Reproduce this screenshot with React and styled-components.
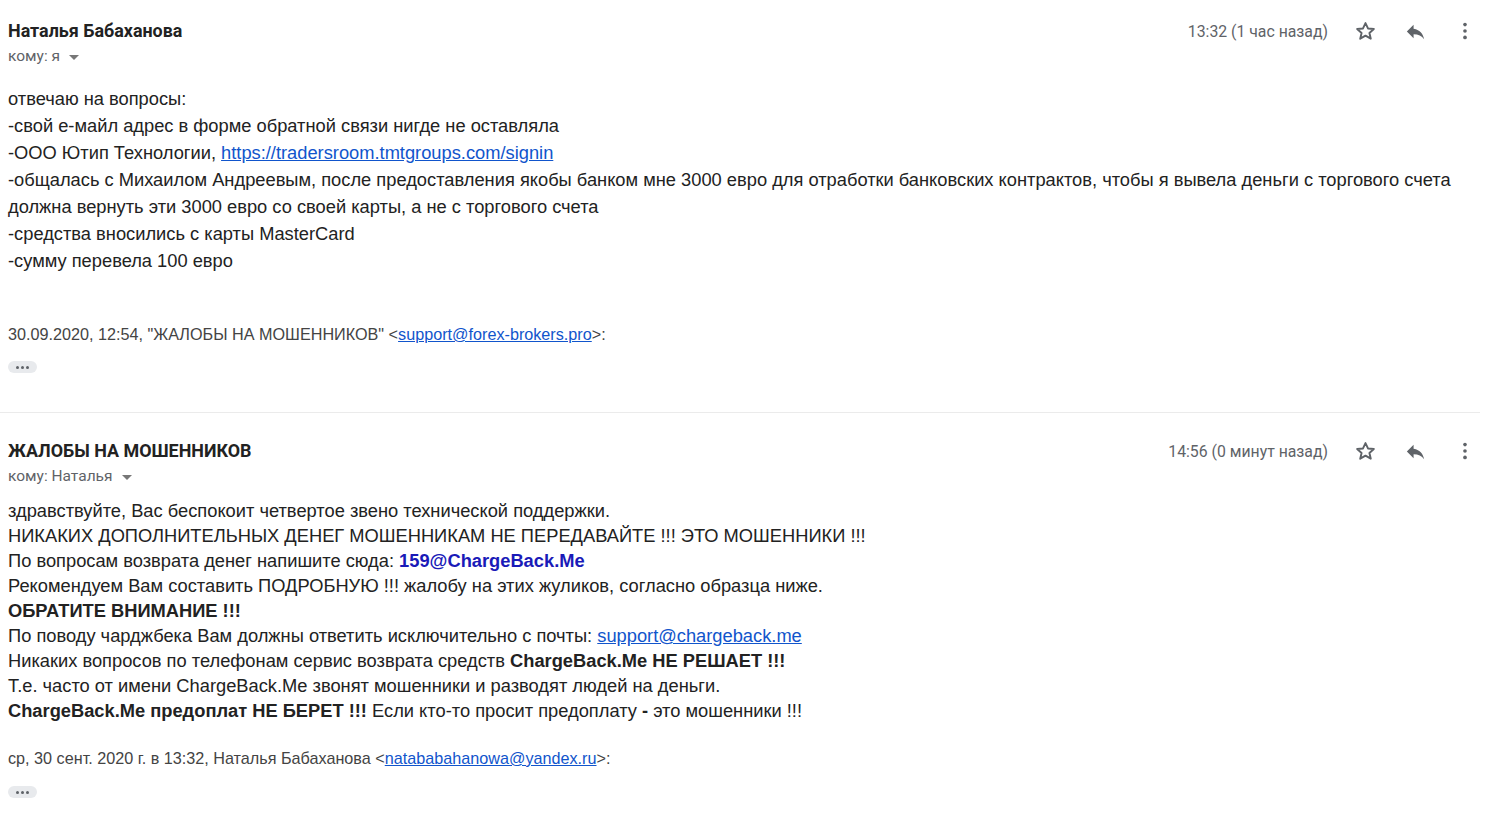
import React from 'react';
import styled, { createGlobalStyle } from 'styled-components';

const GlobalStyle = createGlobalStyle`
  html, body {
    margin: 0;
    padding: 0;
    background: #fff;
  }
  body {
    font-family: "Liberation Sans", Arial, sans-serif;
    color: #222;
  }
`;

const StarIcon = () => (
  <svg width="23" height="23" viewBox="0 0 24 24" fill="none" stroke="#5f6368" strokeWidth="2" strokeLinejoin="round">
    <path d="M12 3.2l2.6 5.6 6.1.6-4.6 4.1 1.4 6-5.5-3.2-5.5 3.2 1.4-6-4.6-4.1 6.1-.6z" />
  </svg>
);

const ReplyIcon = () => (
  <svg width="23" height="23" viewBox="0 0 24 24" fill="#5f6368">
    <path d="M10 9V5l-7 7 7 7v-4.1c5 0 8.5 1.6 11 5.1-1-5-4-10-11-11z" />
  </svg>
);

const MoreIcon = () => (
  <svg width="22" height="22" viewBox="0 0 24 24" fill="#5f6368">
    <circle cx="12" cy="5" r="2" />
    <circle cx="12" cy="12" r="2" />
    <circle cx="12" cy="19" r="2" />
  </svg>
);

const Page = styled.div`
  width: 1480px;
  padding-top: 18px;
`;

const Message = styled.section`
  padding: 0 0 0 8px;
  border-bottom: ${(p) => (p.divider ? '1px solid #ebebeb' : 'none')};
  padding-bottom: ${(p) => (p.divider ? '39px' : '20px')};
  margin-bottom: ${(p) => (p.divider ? '25px' : '0')};
`;

const Header = styled.div`
  display: flex;
  justify-content: space-between;
  align-items: flex-start;
`;

const Sender = styled.div`
  display: flex;
  flex-direction: column;
`;

const Name = styled.div`
  font-family: Roboto, "Liberation Sans", sans-serif;
  font-weight: 700;
  font-size: 17.9px;
  line-height: 26px;
  color: #222;
`;

const Recipient = styled.div`
  font-family: Roboto, "Liberation Sans", sans-serif;
  font-size: 15.5px;
  line-height: 24px;
  color: #5f6368;
  display: flex;
  align-items: center;
  gap: 9px;
`;

const Caret = styled.span`
  width: 0;
  height: 0;
  border-left: 5px solid transparent;
  border-right: 5px solid transparent;
  border-top: 5px solid #777;
  margin-top: 2px;
`;

const Actions = styled.div`
  display: flex;
  align-items: center;
  height: 26px;
  margin-right: -10px;
`;

const Time = styled.span`
  font-family: Roboto, "Liberation Sans", sans-serif;
  font-size: 15.8px;
  color: #5f6368;
  margin-right: 12px;
`;

const IconButton = styled.span`
  display: inline-flex;
  align-items: center;
  justify-content: center;
  width: 50px;
  height: 26px;
`;

const Body = styled.div`
  margin-top: ${(p) => p.top}px;
  font-size: 18.3px;
  line-height: ${(p) => p.lh}px;
  color: #222;
`;

const Line = styled.div``;

const Quote = styled.div`
  margin-top: ${(p) => p.top}px;
  font-size: 16.2px;
  line-height: 24px;
  color: #444;
`;

const Link = styled.a`
  color: #1155cc;
  text-decoration: underline;
`;

const Strong = styled.b`
  font-weight: 700;
  color: ${(p) => p.color || '#222'};
`;

const Ellipsis = styled.div`
  margin-top: ${(p) => p.top}px;
  width: 29px;
  height: 12px;
  border-radius: 6px;
  background: #e8eaed;
  display: flex;
  align-items: center;
  justify-content: center;
  gap: 2px;

  span {
    width: 3px;
    height: 3px;
    border-radius: 50%;
    background: #5f6368;
  }
`;

const MessageHeader = ({ name, to, time }) => (
  <Header>
    <Sender>
      <Name>{name}</Name>
      <Recipient>
        кому: {to} <Caret />
      </Recipient>
    </Sender>
    <Actions>
      <Time>{time}</Time>
      <IconButton>
        <StarIcon />
      </IconButton>
      <IconButton>
        <ReplyIcon />
      </IconButton>
      <IconButton>
        <MoreIcon />
      </IconButton>
    </Actions>
  </Header>
);

const Dots = ({ top }) => (
  <Ellipsis top={top}>
    <span />
    <span />
    <span />
  </Ellipsis>
);

export default function App() {
  return (
    <Page>
      <GlobalStyle />
      <Message divider>
        <MessageHeader name="Наталья Бабаханова" to="я" time="13:32 (1 час назад)" />
        <Body top={17} lh={27}>
          <Line>отвечаю на вопросы:</Line>
          <Line>-свой е-майл адрес в форме обратной связи нигде не оставляла</Line>
          <Line>
            -ООО Ютип Технологии, <Link href="#">https://tradersroom.tmtgroups.com/signin</Link>
          </Line>
          <Line>
            -общалась с Михаилом Андреевым, после предоставления якобы банком мне 3000 евро для отработки банковских контрактов, чтобы я вывела деньги с торгового счета
          </Line>
          <Line>должна вернуть эти 3000 евро со своей карты, а не с торгового счета</Line>
          <Line>-средства вносились с карты MasterCard</Line>
          <Line>-сумму перевела 100 евро</Line>
        </Body>
        <Quote top={48}>
          30.09.2020, 12:54, "ЖАЛОБЫ НА МОШЕННИКОВ" &lt;<Link href="#">support@forex-brokers.pro</Link>&gt;:
        </Quote>
        <Dots top={15} />
      </Message>

      <Message>
        <MessageHeader name="ЖАЛОБЫ НА МОШЕННИКОВ" to="Наталья" time="14:56 (0 минут назад)" />
        <Body top={10} lh={25}>
          <Line>здравствуйте, Вас беспокоит четвертое звено технической поддержки.</Line>
          <Line>НИКАКИХ ДОПОЛНИТЕЛЬНЫХ ДЕНЕГ МОШЕННИКАМ НЕ ПЕРЕДАВАЙТЕ !!! ЭТО МОШЕННИКИ !!!</Line>
          <Line>
            По вопросам возврата денег напишите сюда: <Strong color="#1a1ab8">159@ChargeBack.Me</Strong>
          </Line>
          <Line>Рекомендуем Вам составить ПОДРОБНУЮ !!! жалобу на этих жуликов, согласно образца ниже.</Line>
          <Line>
            <Strong>ОБРАТИТЕ ВНИМАНИЕ !!!</Strong>
          </Line>
          <Line>
            По поводу чарджбека Вам должны ответить исключительно с почты: <Link href="#">support@chargeback.me</Link>
          </Line>
          <Line>
            Никаких вопросов по телефонам сервис возврата средств <Strong>ChargeBack.Me НЕ РЕШАЕТ !!!</Strong>
          </Line>
          <Line>Т.е. часто от имени ChargeBack.Me звонят мошенники и разводят людей на деньги.</Line>
          <Line>
            <Strong>ChargeBack.Me предоплат НЕ БЕРЕТ !!!</Strong> Если кто-то просит предоплату <Strong>-</Strong> это мошенники !!!
          </Line>
        </Body>
        <Quote top={23}>
          ср, 30 сент. 2020 г. в 13:32, Наталья Бабаханова &lt;<Link href="#">natababahanowa@yandex.ru</Link>&gt;:
        </Quote>
        <Dots top={16} />
      </Message>
    </Page>
  );
}
